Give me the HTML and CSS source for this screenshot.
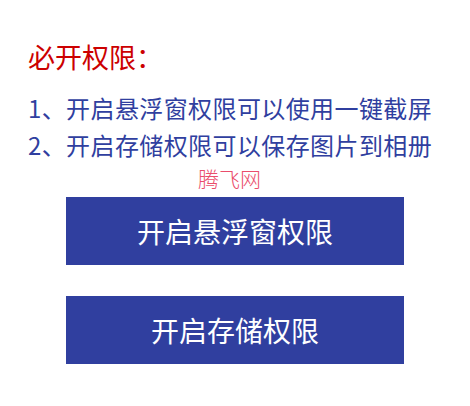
FILE: index.html
```html
<!DOCTYPE html>
<html lang="zh-CN">
<head>
<meta charset="utf-8">
<title>必开权限</title>
<link rel="stylesheet" href="styles.css">
</head>
<body>
<div class="page">
  <div class="title">必开权限：</div>
  <div class="tips">
    <div class="tip">1、开启悬浮窗权限可以使用一键截屏</div>
    <div class="tip">2、开启存储权限可以保存图片到相册</div>
  </div>
  <div class="actions">
    <button class="btn">开启悬浮窗权限</button>
    <button class="btn">开启存储权限</button>
  </div>
  <div class="watermark">腾飞网</div>
</div>
</body>
</html>
```
FILE: styles.css
```css
html, body {
  margin: 0;
  padding: 0;
  background: #ffffff;
}
.page {
  position: relative;
  width: 470px;
  height: 406px;
  box-sizing: border-box;
  padding: 38px 0 0 28px;
  font-family: "Noto Sans CJK SC", "Noto Sans", sans-serif;
}
.title {
  font-size: 27px;
  line-height: 37px;
  color: #cc0000;
}
.tips {
  margin-top: 14px;
}
.tip {
  font-size: 24px;
  line-height: 37px;
  color: #303f9f;
  letter-spacing: 0.4px;
  white-space: nowrap;
}
.actions {
  display: flex;
  flex-direction: column;
  gap: 31px;
  margin: 34px 0 0 38px;
  width: 338px;
}
.btn {
  display: flex;
  align-items: center;
  justify-content: center;
  height: 68px;
  width: 338px;
  border: none;
  padding: 0;
  background: #303f9f;
  color: #ffffff;
  font-family: "Noto Sans CJK SC", "Noto Sans", sans-serif;
  font-size: 28px;
}
.watermark {
  position: absolute;
  left: 198px;
  top: 164px;
  font-size: 21px;
  line-height: 28px;
  color: #ea4d6c;
  font-weight: 300;
  font-family: "Noto Sans CJK SC", sans-serif;
}
```
